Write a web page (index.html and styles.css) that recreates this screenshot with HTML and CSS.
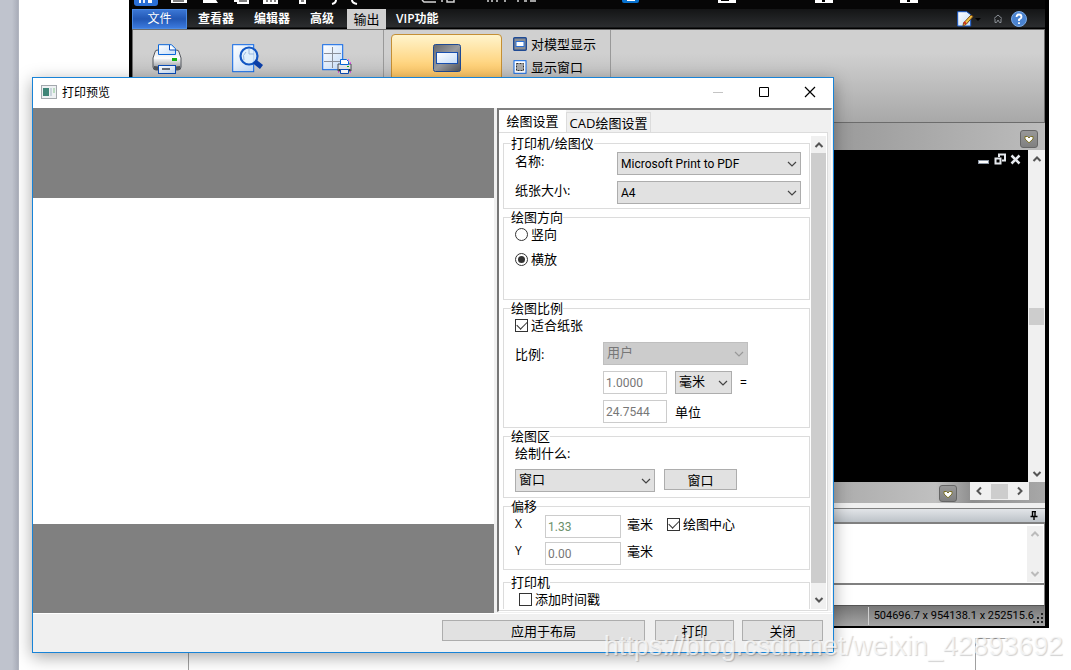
FILE: index.html
```html
<!DOCTYPE html>
<html lang="zh-CN">
<head>
<meta charset="utf-8">
<title>打印预览</title>
<link rel="stylesheet" href="styles.css">
</head>
<body>
<svg class="defs" width="0" height="0" aria-hidden="true">
  <symbol id="chev-down" viewBox="0 0 10 10"><path d="M1 3l4 4 4-4" fill="none" stroke="currentColor" stroke-width="1.200"/></symbol>
  <symbol id="arrow-up" viewBox="0 0 10 10"><path d="M1.500 7L5 3.500 8.500 7" fill="none" stroke="currentColor" stroke-width="2"/></symbol>
  <symbol id="arrow-down" viewBox="0 0 10 10"><path d="M1.500 3L5 6.500 8.500 3" fill="none" stroke="currentColor" stroke-width="2"/></symbol>
  <symbol id="arrow-left" viewBox="0 0 10 10"><path d="M7 1.500L3.500 5 7 8.500" fill="none" stroke="currentColor" stroke-width="2"/></symbol>
  <symbol id="arrow-right" viewBox="0 0 10 10"><path d="M3 1.500L6.500 5 3 8.500" fill="none" stroke="currentColor" stroke-width="2"/></symbol>
  <symbol id="heart" viewBox="0 0 10 10"><path d="M1 2.500h2.500L5 4l1.500-1.500H9V5L5 8.800 1 5z" fill="#fff" stroke="#7d7328"/></symbol>
  <symbol id="printer" viewBox="0 0 30 30">
    <path d="M3 8q0-2 3-2h18q3 0 3 2l2 6v9q0 3-3 3H4q-3 0-3-3v-9z" fill="url(#g-metal)" stroke="#55595f"/>
    <path d="M2 14h26" stroke="#fff"/><path d="M2 22q13 2 26 0v2q0 2-3 2H5q-3 0-3-2z" fill="#50545a"/>
    <path d="M6.500 10.500V.700h13l4 4v5.800z" fill="url(#g-paper)" stroke="#0a66d8"/><path d="M17.500 1v5h6" fill="#fff" stroke="#0a4cb8"/>
    <rect x="20" y="14" width="5" height="3" fill="#12b012"/>
    <rect x="6.500" y="21.500" width="17" height="8" fill="url(#g-paper)" stroke="#0a4cb8"/><path d="M10 25h8" stroke="#3b3f48" stroke-width="1.500"/>
  </symbol>
  <symbol id="display" viewBox="0 0 28 28">
    <rect x=".5" y=".5" width="27" height="27" rx="2" fill="url(#g-dark)" stroke="#1f4a94"/>
    <rect x="3.500" y="8.500" width="21" height="11" fill="url(#g-paper)" stroke="#174fb0"/>
  </symbol>
  <symbol id="display-small" viewBox="0 0 14 14">
    <rect x=".7" y=".7" width="12.600" height="12.600" rx="1" fill="#8b8e93" stroke="#1f4a94" stroke-width="1.400"/>
    <rect x="3" y="4.500" width="8" height="5" fill="#fff" stroke="#2a70d8"/>
  </symbol>
  <linearGradient id="g-metal" x2="0" y2="1"><stop offset="0" stop-color="#dfe2e6"/><stop offset=".4" stop-color="#fafafa"/><stop offset="1" stop-color="#85898f"/></linearGradient>
  <linearGradient id="g-paper" x2="1" y2="1"><stop offset="0" stop-color="#fff"/><stop offset="1" stop-color="#c4dcf8"/></linearGradient>
  <linearGradient id="g-dark" x2="1" y2="1"><stop offset="0" stop-color="#63666c"/><stop offset=".5" stop-color="#9a9ca0"/><stop offset="1" stop-color="#505358"/></linearGradient>
</svg>

<main class="desktop">
  <div class="gutter"></div>
  <div class="page-mark mark-left"></div>
  <div class="page-mark mark-right"></div>

  <section class="cad">
    <div class="quickbar">
      <span class="logo"></span>
      <svg width="800" height="6" viewBox="0 0 800 6" aria-hidden="true">
        <g fill="#fff"><path d="M1 0h16v3H1zM33 0h13l2 3H33zM64 0h15v4H67V2h-3zM93 0h15v4H93zM129 0h7v4h-7z"/></g>
        <path d="M3 1h11M69 1h8M96 1h2m2 0h2m2 0h2M131 1h3" stroke="#000"/>
        <path d="M166 0q0 3-4 4M182 0q0 3 5 4" fill="none" stroke="#fff" stroke-width="2"/>
        <path d="M252 0l2 2 12 0M272 0v2M277 0v2h7V0M318 0v2M322 0v2M327 2V0M335 0v2M348 0v2M354 1h3M360 1h6" stroke="#d5d5d5" stroke-width="1.500" fill="none"/>
        <path d="M452 0h17v1q0 2-2 2h-13q-2 0-2-2z" fill="#0872cf"/><path d="M457 0h8v1h-8z" fill="#fff"/>
        <path d="M548 0h18v3h-18zM645 0h18v3h-18zM730 0h18v3h-18z" fill="#fff"/><path d="M551 0h8v1h-8zM652 0h3v2h-3zM737 0h3v2h-3z" fill="#000"/>
      </svg>
    </div>
    <nav class="tabs">
      <button class="tab tab-file">文件</button>
      <button class="tab">查看器</button>
      <button class="tab">编辑器</button>
      <button class="tab">高级</button>
      <button class="tab tab-on">输出</button>
      <button class="tab">VIP功能</button>
      <span class="tab-tools">
        <svg width="24" height="16" viewBox="0 0 24 16"><path d="M.7.700h9l4 3V15H.7z" fill="url(#g-paper)" stroke="#1556c4"/><path d="M14 4l2 1.500-7 8-3 1.500.5-3z" fill="#f0c040" stroke="#7a4a18"/><path d="M7 11l2 2" stroke="#d03020" stroke-width="2"/><path d="M18 7h6l-3 3z" fill="#000"/></svg>
        <svg width="10" height="10" viewBox="0 0 10 10"><path d="M1 4.500L5 1l4 3.500M2 5v3.500h1.500L5 6l1.500 2.500H8V5" fill="none" stroke="#8b9096"/></svg>
        <svg width="16" height="16" viewBox="0 0 16 16"><circle cx="8" cy="8" r="7.500" fill="#4a83d0" stroke="#7aa9e4"/><path d="M5.500 6q0-2.500 2.500-2.500T10.500 6Q10.500 7.200 8 8.500V10M8 11.200v1.800" fill="none" stroke="#fff" stroke-width="1.800"/></svg>
      </span>
    </nav>
    <div class="ribbon">
      <div class="tools">
        <button class="tool" aria-label="打印"><svg width="30" height="30"><use href="#printer"/></svg></button>
        <button class="tool" aria-label="打印预览"><svg width="32" height="30" viewBox="0 0 32 30"><rect x=".7" y=".7" width="21" height="27" fill="url(#g-paper)" stroke="#0a66e8"/><circle cx="17" cy="12" r="8.500" fill="#dff0fd" fill-opacity=".8" stroke="#1257c4" stroke-width="2.200"/><path d="M17 5v5h5M12 16q-2-5 2-8" fill="none" stroke="#9ab8de"/><path d="M22.500 17.500l7 5.500" stroke="#0b3fa8" stroke-width="5"/></svg></button>
        <button class="tool" aria-label="批量打印"><svg width="30" height="31" viewBox="0 0 30 31"><rect x=".7" y=".7" width="20" height="25" fill="url(#g-paper)" stroke="#0a66e8"/><path d="M10.500 3v21M2 9.500h17M2 17.500h17" stroke="#8a8f99"/><path d="M16 20h13v7H16z" fill="#e4e6ea" stroke="#4b4f56"/><path d="M18.500 20.500v-5h6l2 2v3z" fill="#fff" stroke="#0a66d8"/><path d="M16.500 26h12" stroke="#333" stroke-width="2"/><path d="M18.500 25.500h8v4h-8z" fill="#fff" stroke="#0a4cb8"/><path d="M25 22.500h2" stroke="#12b012"/><path d="M26 16h1M28 19h1M16 28h1M28 28h1" stroke="#f0f"/></svg></button>
      </div>
      <button class="tool-active" aria-label="显示"><svg width="28" height="28"><use href="#display"/></svg></button>
      <div class="tool-list">
        <button class="tool-line"><svg width="14" height="14"><use href="#display-small"/></svg>对模型显示</button>
        <button class="tool-line"><svg width="14" height="14" viewBox="0 0 14 14"><rect x="1" y=".7" width="12" height="12.600" fill="#fff" stroke="#0a66e8"/><rect x="3.500" y="3.500" width="7" height="7" fill="#aaa" stroke="#333" stroke-dasharray="2 1"/></svg>显示窗口</button>
      </div>
    </div>
    <div class="docbar"><button class="drop" aria-label="展开"><svg width="10" height="10"><use href="#heart"/></svg></button></div>
    <div class="viewport">
      <div class="canvas">
        <svg width="44" height="12" viewBox="0 0 44 12"><rect x=".5" y="7.500" width="10" height="3" fill="#fff" stroke="#8d97a5"/><path d="M21 4V1.500h6v6h-3M17.500 5.500h5v5h-5z" fill="none" stroke="#e6e9ee" stroke-width="2"/><path d="M33.500 2.500l8 8M41.500 2.500l-8 8" stroke="#e6e9ee" stroke-width="2.500"/></svg>
      </div>
      <div class="vscroll view-scroll">
        <svg width="10" height="10"><use href="#arrow-up"/></svg>
        <span class="thumb"></span>
        <svg width="10" height="10"><use href="#arrow-down"/></svg>
      </div>
    </div>
    <div class="sheetbar">
      <button class="drop" aria-label="展开"><svg width="10" height="10"><use href="#heart"/></svg></button>
      <div class="hscroll">
        <svg width="10" height="10"><use href="#arrow-left"/></svg>
        <span class="hthumb"></span>
        <svg width="10" height="10"><use href="#arrow-right"/></svg>
      </div>
    </div>
    <div class="cmdhead"><svg width="8" height="9" viewBox="0 0 8 9"><path d="M2 .5h4M2.500 0v5M5 0v5M.5 5.500h7M4 5v4" fill="none" stroke="#000" stroke-width="1.400"/></svg></div>
    <div class="history">
      <div class="vscroll history-scroll">
        <svg width="10" height="10"><use href="#arrow-up"/></svg>
        <svg width="10" height="10"><use href="#arrow-down"/></svg>
      </div>
    </div>
    <input class="cmdline" aria-label="命令行">
    <footer class="status">
      <span class="coords">504696.7 x 954138.1 x 252515.6</span>
      <svg width="12" height="12" viewBox="0 0 12 12"><path d="M8 0h2v2H8zM4 4h2v2H4zM8 4h2v2H8zM0 8h2v2H0zM4 8h2v2H4zM8 8h2v2H8z" fill="#222"/></svg>
    </footer>
  </section>

  <section class="dialog">
    <header class="titlebar">
      <svg width="16" height="14" viewBox="0 0 16 14"><rect x=".5" y=".5" width="15" height="13" fill="#eef1f3" stroke="#a3a8ad"/><rect x="2" y="3" width="6" height="8" fill="#3f8577"/><rect x="9" y="3" width="2" height="8" fill="#c9d4dc"/><rect x="12" y="3" width="2" height="5" fill="#b9dcc0"/></svg>
      <h1>打印预览</h1>
      <button class="winbtn" aria-label="最小化"><svg width="12" height="12"><path d="M1 6.500h10" stroke="#c4c4c4"/></svg></button>
      <button class="winbtn" aria-label="最大化"><svg width="12" height="12"><path d="M1.500 1.500h9v9h-9z" fill="none" stroke="#000"/></svg></button>
      <button class="winbtn" aria-label="关闭窗口"><svg width="12" height="12"><path d="M1 1l10 10M11 1L1 11" stroke="#000" stroke-width="1.200"/></svg></button>
    </header>
    <div class="dialog-body">
      <div class="preview"><div class="paper"></div></div>
      <div class="settings">
        <div class="subtabs">
          <button class="subtab subtab-on">绘图设置</button>
          <button class="subtab">CAD绘图设置</button>
        </div>
        <div class="pane">
          <form class="groups">
            <fieldset class="group g-printer">
              <legend>打印机/绘图仪</legend>
              <label for="pname">名称:</label>
              <span class="combo"><select id="pname"><option>Microsoft Print to PDF</option></select><svg width="10" height="10"><use href="#chev-down"/></svg></span>
              <label for="psize">纸张大小:</label>
              <span class="combo"><select id="psize"><option>A4</option></select><svg width="10" height="10"><use href="#chev-down"/></svg></span>
            </fieldset>
            <fieldset class="group g-orient">
              <legend>绘图方向</legend>
              <label class="tick"><input type="radio" name="orient">竖向</label>
              <label class="tick"><input type="radio" name="orient" checked>横放</label>
            </fieldset>
            <fieldset class="group g-scale">
              <legend>绘图比例</legend>
              <label class="tick"><input type="checkbox" checked>适合纸张</label>
              <div class="scale-grid">
                <label for="scale">比例:</label>
                <span class="combo wide disabled"><select id="scale" disabled><option>用户</option></select><svg width="10" height="10"><use href="#chev-down"/></svg></span>
                <input class="field second" value="1.0000" aria-label="图纸" disabled>
                <span class="combo"><select class="big" aria-label="图纸单位"><option>毫米</option></select><svg width="10" height="10"><use href="#chev-down"/></svg></span>
                <span class="equals">=</span>
                <input class="field second" id="units" value="24.7544" disabled>
                <label for="units">单位</label>
              </div>
            </fieldset>
            <fieldset class="group g-area">
              <legend>绘图区</legend>
              <label for="what">绘制什么:</label>
              <div class="line">
                <span class="combo"><select id="what" class="big"><option>窗口</option></select><svg width="10" height="10"><use href="#chev-down"/></svg></span>
                <button type="button" class="push">窗口</button>
              </div>
            </fieldset>
            <fieldset class="group g-offset">
              <legend>偏移</legend>
              <label class="axis" for="offx">X</label>
              <input class="field green" id="offx" value="1.33" disabled>
              <span>毫米</span>
              <label class="tick"><input type="checkbox" checked>绘图中心</label>
              <label class="axis" for="offy">Y</label>
              <input class="field" id="offy" value="0.00" disabled>
              <span>毫米</span>
            </fieldset>
            <fieldset class="group g-stamp">
              <legend>打印机</legend>
              <label class="tick"><input type="checkbox">添加时间戳</label>
            </fieldset>
          </form>
          <div class="vscroll pane-scroll">
            <svg width="10" height="10"><use href="#arrow-up"/></svg>
            <span class="thumb"></span>
            <svg width="10" height="10"><use href="#arrow-down"/></svg>
          </div>
        </div>
      </div>
    </div>
    <footer class="actions">
      <button class="push apply">应用于布局</button>
      <button class="push print">打印</button>
      <button class="push">关闭</button>
    </footer>
  </section>
  <div class="watermark">https://blog.csdn.net/weixin_42893692</div>
</main>
</body>
</html>
```

FILE: styles.css
```css
* { box-sizing: border-box; }
body {
  margin: 0;
  background: #fff;
  color: #000;
  font: 13px/18px "Open Sans", "Noto Sans CJK SC", sans-serif;
}
button, input, select { font: inherit; color: inherit; margin: 0; }
button { border: 0; padding: 0; background: none; }
svg { display: block; flex: none; }
.defs { position: absolute; }
.desktop { position: relative; height: 100vh; min-height: 640px; overflow: hidden; }
.gutter {
  width: 19px;
  height: 100%;
  background: linear-gradient(90deg, #bfc3cd 0, #bfc3cd 12px, #a9adb9 18px, #b9bdc6 19px);
}
.page-mark { position: absolute; bottom: 0; border-left: 1px solid #a0a0a0; }
.mark-left { left: 188px; height: 18px; }
.mark-right { right: 63px; width: 33px; height: 32px; border-top: 1px solid #a0a0a0; }

/* CAD application window */
.cad {
  position: absolute;
  top: 0; bottom: 42px; left: 129px; right: 22px;
  display: flex;
  flex-direction: column;
  padding: 0 4px 2px 3px;
  background: #000;
}
.quickbar { display: flex; height: 9px; background: #060606; overflow: hidden; }
.logo {
  flex: none;
  width: 24px;
  height: 6px;
  margin: 0 12px 0 2px;
  border-radius: 0 0 3px 3px;
  background: linear-gradient(#0000 3px, #2a70d8 3px), linear-gradient(90deg, #2a70d8 20%, #fff 20% 28%, #2a70d8 28% 36%, #e6efff 36% 44%, #2a70d8 44% 60%, #fff 60% 75%, #2a70d8 75%);
}
.tabs {
  display: flex;
  height: 20px;
  background: linear-gradient(#141516, #2b2d2f 90%, #000 95%);
  color: #fff;
}
.tab { padding: 0 10px; font-size: 12px; font-weight: 600; line-height: 18px; }
.tab-file {
  width: 55px;
  margin-right: 1px;
  font-size: 12px;
  font-weight: 400;
  border: 1px solid #4b8be6;
  background: linear-gradient(#3b76d4, #2257b4 50%, #3c7ade);
  line-height: 16px;
}
.tab-on {
  width: 39px;
  margin-left: 3px;
  padding: 0;
  background: #d0d0d0;
  color: #000;
  font-size: 13px;
  font-weight: 400;
}
.tab-tools { display: flex; align-items: center; gap: 12px; margin-left: auto; padding-right: 18px; }
.tab-tools svg + svg + svg { margin-left: -4px; }
.ribbon {
  display: flex;
  height: 94px;
  border: 1px solid #6c6c6c;
  background: linear-gradient(#d0d0d0 25%, #a8a8a8);
}
.tools {
  display: flex;
  align-items: flex-start;
  gap: 58px;
  width: 251px;
  padding: 14px 0 0 19px;
  border-right: 1px solid #999;
}
.tool:first-child { margin-right: -8px; }
.tool-active {
  display: flex;
  justify-content: center;
  width: 111px;
  height: 70px;
  margin: 4px 11px 0 7px;
  padding-top: 9px;
  border: 1px solid #c48f35;
  border-radius: 4px;
  background: linear-gradient(#fff4cc, #ffd27a 45%, #f0a030);
}
.tool-list {
  display: flex;
  flex-direction: column;
  gap: 5px;
  width: 98px;
  padding-top: 5px;
  border-right: 1px solid #999;
}
.tool-line { display: flex; align-items: center; gap: 4px; white-space: nowrap; }
.docbar {
  display: flex;
  justify-content: flex-end;
  height: 27px;
  padding: 7px 7px 0 0;
  background: linear-gradient(90deg, #999 76%, #bcbcbc);
}
.drop {
  display: flex;
  align-items: center;
  justify-content: center;
  width: 18px;
  height: 18px;
  border: 1px solid #666;
  border-radius: 3px;
  background: linear-gradient(#989898, #808080);
}
.viewport { display: flex; flex: 1; min-height: 0; }
.canvas { display: flex; flex: 1; justify-content: flex-end; padding: 3px 6px 0 0; background: #000; }
.vscroll {
  display: flex;
  flex-direction: column;
  align-items: center;
  justify-content: space-between;
  background: #f0f0f0;
  color: #555;
}
.thumb { width: 100%; background: #cdcdcd; }
.view-scroll { width: 17px; padding: 4px 1px 3px; }
.view-scroll .thumb { height: 17px; }
.sheetbar {
  display: flex;
  justify-content: flex-end;
  gap: 13px;
  height: 21px;
  padding: 0 16px 3px 0;
  background: linear-gradient(90deg, #aaa 76%, #c0c0c0 88%, #8e8e8e 92%, #a8a8a8);
}
.sheetbar .drop { margin-top: 3px; height: 17px; }
.hscroll {
  display: flex;
  align-items: center;
  justify-content: space-between;
  width: 59px;
  padding: 0 4px;
  background: #f0f0f0;
  color: #555;
}
.hthumb { width: 17px; height: 15px; background: #cdcdcd; }
.cmdhead {
  display: flex;
  align-items: center;
  justify-content: flex-end;
  height: 20px;
  padding: 0 7px 0 0;
  border-top: 5px solid #f0f0f0;
  border-bottom: 1px solid #808080;
  background: linear-gradient(#808080 1px, #e2e5e8 1px, #bcc2c8);
}
.history {
  display: flex;
  justify-content: flex-end;
  height: 62px;
  padding: 2px 1px 1px 0;
  border-top: 1px solid #808080;
  border-bottom: 2px solid #808080;
  border-right: 1px solid #808080;
  background: #fff;
}
.history-scroll { width: 16px; padding: 3px 0; color: #bbb; }
.cmdline {
  width: 100%;
  height: 21px;
  border: 0;
  border-right: 1px solid #808080;
  border-bottom: 1px solid #555;
  background: #fff;
}
.status {
  display: flex;
  align-items: center;
  justify-content: flex-end;
  height: 20px;
  background: linear-gradient(#777, #a5a5a5);
  font: 11px/18px Roboto, sans-serif;
}
.coords { padding-left: 5px; border-left: 1px solid #d0d0d0; white-space: nowrap; }
.status svg { margin: 6px 0 0 -1px; }

/* Print preview dialog */
.dialog {
  position: absolute;
  top: 77px; bottom: 17px; left: 32px; right: 237px;
  display: flex;
  flex-direction: column;
  border: 1px solid #1883d7;
  background: #f0f0f0;
  box-shadow: 0 4px 16px rgba(0, 0, 0, .35);
}
.titlebar { display: flex; align-items: center; height: 30px; padding: 0 0 2px 8px; background: #fff; }
.titlebar h1 { flex: 1; margin: 2px 0 0 5px; font-size: 12px; font-weight: 400; }
.winbtn { display: flex; justify-content: center; width: 46px; }
.dialog-body { display: flex; flex: 1; min-height: 0; border-bottom: 1px solid #fff; }
.preview { display: flex; flex-direction: column; flex: 1; padding: 90px 0 89px; background: #808080; }
.paper { flex: 1; background: #fff; }
.settings {
  display: flex;
  flex-direction: column;
  width: 335px;
  margin: 0 1px 1px 3px;
  border: 2px solid #808080;
  border-right: 1px solid #fff;
  border-bottom: 1px solid #fff;
  border-left-color: #777;
}
.subtabs { display: flex; align-items: flex-end; height: 22px; }
.subtab {
  width: 85px;
  height: 20px;
  border: 1px solid #dcdcdc;
  border-bottom: 0;
  line-height: 16px;
  white-space: nowrap;
}
.subtab-on { width: 67px; height: 22px; border: 0; background: #fff; line-height: 18px; }
.pane {
  display: flex;
  flex: 1;
  min-height: 0;
  margin-right: 3px;
  padding: 2px 1px 1px 4px;
  border: 1px solid #dcdcdc;
  border-left: 0;
  background: #fff;
}
.groups { flex: 1; min-width: 0; overflow: hidden; }
.pane-scroll { width: 15px; margin: 1px 0 0 1px; padding: 4px 0 4px; }
.pane-scroll .thumb { flex: 1; margin: 3px 0 12px; }
.group { min-width: 0; margin: 0; padding: 1px 8px 0 11px; border: 1px solid #dcdcdc; }
legend { margin-left: -4px; padding: 0; line-height: 16px; }
.g-printer { display: grid; grid-template-columns: 102px 1fr; row-gap: 6px; padding-bottom: 4px; }
.g-orient { display: grid; row-gap: 7px; padding: 0 8px 31px 11px; }
.tick { display: flex; align-items: center; gap: 3px; white-space: nowrap; }
.tick input {
  appearance: none;
  display: grid;
  place-items: center;
  width: 13px;
  height: 13px;
  border: 1px solid #333;
  background: #fff;
}
.tick input[type="radio"] { border-radius: 50%; }
.tick input[type="radio"]:checked::before { content: ""; width: 7px; height: 7px; border-radius: 50%; background: #333; }
.tick input[type="checkbox"]:checked::before {
  content: "";
  width: 9px;
  height: 5px;
  margin-bottom: 3px;
  border: solid #333;
  border-width: 0 0 1px 1px;
  transform: rotate(-45deg);
}
.combo { display: grid; align-items: center; }
.combo > * { grid-area: 1 / 1; }
.combo svg { justify-self: end; margin-right: 4px; pointer-events: none; color: #444; }
.combo select {
  appearance: none;
  width: 100%;
  height: 23px;
  padding: 0 3px;
  border: 1px solid #adadad;
  border-radius: 0;
  background: #e1e1e1;
  font: 12px/18px Roboto, "Noto Sans CJK SC", sans-serif;
}
.combo .big { padding: 0 3px 2px; font-size: 13px; }
.combo.disabled select { border-color: #bfbfbf; background: #ccc; color: #777; opacity: 1; font-size: 13px; padding-bottom: 2px; }
.disabled svg { color: #999; }
.field {
  width: 100%;
  height: 23px;
  padding: 0 2px;
  border: 1px solid #ccc;
  background: #fff;
  color: #777;
  font: 12px/18px Roboto, sans-serif;
}
.g-scale { padding: 0 8px 4px 11px; }
.scale-grid {
  display: grid;
  grid-template-columns: 80px 64px 57px 1fr;
  gap: 6px 8px;
  align-items: center;
  margin-top: 8px;
}
.wide { grid-column: 2 / 4; width: 145px; }
.wide + .second, .scale-grid #units { grid-column: 2; }
.equals { font-size: 12px; }
.g-area { padding: 0 8px 5px 11px; }
.line { display: flex; gap: 9px; margin-top: 7px; }
.line .combo { width: 140px; }
.line .push { width: 73px; }
.push { height: 21px; border: 1px solid #adadad; background: #e1e1e1; line-height: 16px; }
.g-offset {
  display: grid;
  grid-template-columns: 24px 76px 34px 1fr;
  gap: 4px 6px;
  align-items: start;
  padding-bottom: 4px;
}
.axis { font-size: 12px; }
.green { color: #6b8f6b; }
.g-stamp { margin-top: 4px; padding: 0 8px 20px 15px; }
.g-stamp legend { margin-left: -8px; }
.actions { display: flex; justify-content: flex-end; height: 38px; padding: 6px 10px 0 0; }
.actions .push { width: 81px; margin-left: 8px; }
.actions .apply { width: 203px; }
.actions .print { width: 79px; margin-left: 10px; }

.watermark {
  position: absolute;
  right: 8px;
  bottom: 9px;
  color: rgba(255, 255, 255, .7);
  font: 27px/30px "Liberation Sans", sans-serif;
  text-shadow: 1px 1px 1px rgba(0, 0, 0, .18);
}
```
